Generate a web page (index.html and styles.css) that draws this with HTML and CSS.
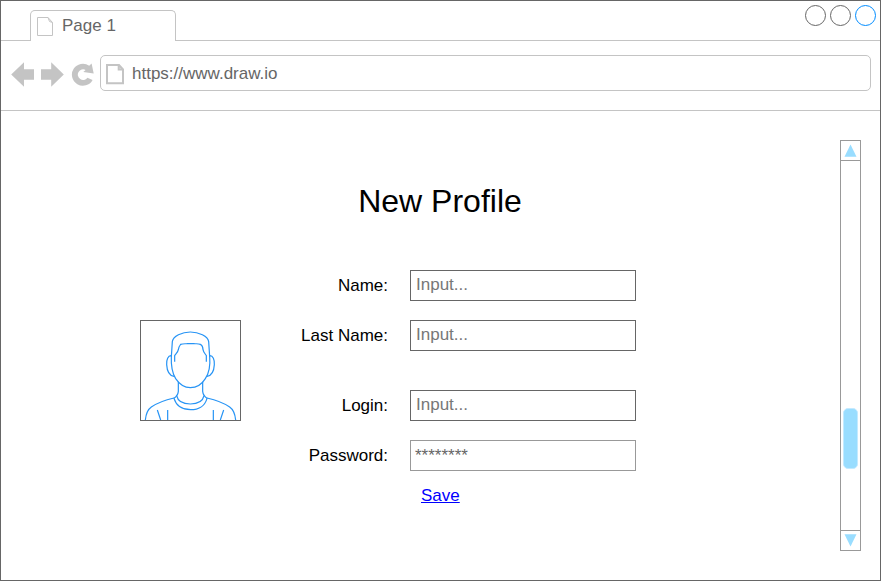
FILE: index.html
```html
<!DOCTYPE html>
<html lang="en">
<head>
<meta charset="utf-8">
<title>New Profile</title>
<link rel="stylesheet" href="styles.css">
</head>
<body>
<div class="window">
  <header class="tabs">
    <div class="tab">
      <svg class="tab-icon" width="17" height="20" viewBox="0 0 17 20"><path d="M.5.5H11L15.5 5.5V18.5H.5ZM11 .5 12.5 4.5 15.5 5.5"/></svg>
      <span>Page 1</span>
    </div>
    <div class="controls">
      <span class="control"></span>
      <span class="control"></span>
      <span class="control control-active"></span>
    </div>
  </header>
  <nav class="toolbar">
    <svg class="nav-icons" width="84" height="26" viewBox="11 62 84 26">
      <path d="M11.2 74.5 24 62.3V69.3H34V79.8H24V86.7Z"/>
      <path d="M63.8 74.5 51.2 62.3V69.3H41V79.8H51.2V86.7Z"/>
      <path d="M92.6 79.9A11 11 0 1 1 89.2 65.7L91.6 63.5 93.7 73.6 83.3 72.1 85.6 70A5.3 5.3 0 1 0 87.4 77.8Z"/>
    </svg>
    <div class="address">
      <svg class="page-icon" width="19" height="22" viewBox="0 0 19 22"><path d="M1 1H13L17 5.5V19.3H1ZM12.7 1V5.5H17"/></svg>
      <span>https://www.draw.io</span>
    </div>
  </nav>
  <main class="content">
    <section class="profile">
      <h1>New Profile</h1>
      <div class="body">
        <div class="avatar">
          <svg width="99" height="99" viewBox="33 33 297 297">
            <path d="M124 140 127 95C129 79 156 66 181 66C206 66 234 79 236 95L239 140"/>
            <path d="M124 138C123 162 127 190 137 206C149 224 165 233 181 233C198 233 215 224 226 206C237 190 241 162 239 138"/>
            <path d="M134 155V137C138 131 144 126 145 119C145 112 149 107 152 103C161 100 168 102 173 101H191C197 102 203 100 211 103C216 106 219 112 219 119C220 126 225 131 229 137V155"/>
            <path d="M124 137C114 136 109 150 110 164C111 182 116 197 132 199M239 137C249 136 254 150 253 164C252 182 247 197 231 199"/>
            <path d="M145 215V244C144 254 139 260 132 265C139 288 159 299 182 299C205 299 225 288 231 265C224 260 219 254 218 244V215"/>
            <path d="M140 257C143 272 156 282 181 282C207 282 219 272 222 257"/>
            <path d="M132 264C101 271 80 280 64 291C52 299 48 311 46 330M231 264C262 271 283 280 299 291C311 299 315 311 317 330"/>
            <path d="M82 300 92 330M113 300V330M250 300V330M281 300 271 330"/>
          </svg>
        </div>
        <form class="form">
          <label for="name">Name:</label>
          <input id="name" type="text" placeholder="Input...">
          <label for="last">Last Name:</label>
          <input id="last" type="text" placeholder="Input...">
          <label class="spaced" for="login">Login:</label>
          <input class="spaced" id="login" type="text" placeholder="Input...">
          <label for="password">Password:</label>
          <input class="password" id="password" type="text" value="********">
          <a class="save" href="#">Save</a>
        </form>
      </div>
    </section>
    <aside class="scrollbar">
      <div class="scroll-button"><svg width="19" height="19" viewBox="0 0 19 19"><path d="M3.5 15.8 9.5 3.5 15.5 15.8Z"/></svg></div>
      <div class="track"><div class="thumb"></div></div>
      <div class="scroll-button scroll-down"><svg width="19" height="19" viewBox="0 0 19 19"><path d="M3.5 3.2 9.5 15.5 15.5 3.2Z"/></svg></div>
    </aside>
  </main>
</div>
</body>
</html>
```

FILE: styles.css
```css
* { box-sizing: border-box; }

body {
  margin: 0;
  background: #fff;
  color: #000;
  font: 17px/20px "Liberation Sans", Arial, sans-serif;
}

svg { display: block; flex: none; fill: none; }

.window {
  display: flex;
  flex-direction: column;
  width: 881px;
  height: 581px;
  border: 1px solid #666;
}

.tabs {
  display: flex;
  justify-content: space-between;
  height: 40px;
  padding: 9px 4px 0 29px;
  border-bottom: 1px solid #c4c4c4;
}

.tab {
  display: flex;
  width: 146px;
  height: 31px;
  padding: 5px 0 0 6px;
  gap: 8px;
  border: 1px solid #c4c4c4;
  border-bottom: 0;
  border-radius: 5px 5px 0 0;
  background: #fff;
  color: #666;
}

.tab-icon { margin-top: 1px; stroke: #c4c4c4; }

.controls { display: flex; gap: 4px; margin-top: -5px; }

.control {
  width: 21px;
  height: 21px;
  border: 1px solid #666;
  border-radius: 50%;
}

.control-active { border-color: #008cff; }

.toolbar {
  display: flex;
  height: 70px;
  padding: 14px 9px 0 10px;
  gap: 5px;
  border-bottom: 1px solid #c4c4c4;
}

.nav-icons { margin-top: 7px; fill: #c4c4c4; }

.address {
  display: flex;
  flex: 1;
  height: 36px;
  padding: 8px 0 0 5px;
  gap: 7px;
  border: 1px solid #c4c4c4;
  border-radius: 5px;
  color: #666;
}

.page-icon { stroke: #c4c4c4; stroke-width: 2; }

.content {
  display: flex;
  flex: 1;
  justify-content: space-between;
  padding: 29px 19px 29px 139px;
}

.profile { width: 600px; }

h1 {
  margin: 41px 0 0;
  font-size: 32px;
  font-weight: 400;
  line-height: 40px;
  text-align: center;
}

.body { display: flex; gap: 49px; margin-top: 49px; }

.avatar {
  width: 101px;
  height: 101px;
  margin-top: 50px;
  border: 1px solid #666;
}

.avatar svg { stroke: #2794f5; stroke-width: 3.6; }

.form {
  display: grid;
  grid-template-columns: 98px 226px;
  grid-auto-rows: auto;
  column-gap: 22px;
  row-gap: 19px;
  align-content: start;
}

label { height: 31px; line-height: 31px; text-align: right; }

input {
  width: 226px;
  height: 31px;
  padding: 0 5px 2px;
  border: 1px solid #666;
  background: #fff;
  color: #666;
  font: inherit;
}

input::placeholder { color: #777; opacity: 1; }

.spaced { margin-top: 20px; }

.password { padding: 0 4px; border-color: #999; }

.save {
  grid-column: 2;
  margin: -4px 0 0 11px;
  color: #00f;
}

.scrollbar {
  display: flex;
  flex-direction: column;
  width: 21px;
  height: 411px;
  border: 1px solid #999;
}

.scroll-button { height: 20px; border-bottom: 1px solid #999; }
.scroll-button svg { fill: #9df; }
.scroll-down { border-top: 1px solid #999; border-bottom: 0; }

.track { flex: 1; padding: 247px 2px 0; }

.thumb { width: 15px; height: 61px; border: 1px solid #c4eaff; border-radius: 5px; background: #9df; }
```
